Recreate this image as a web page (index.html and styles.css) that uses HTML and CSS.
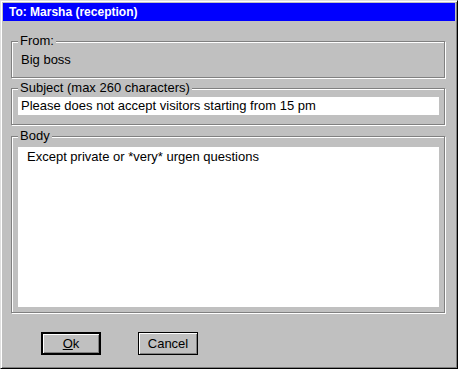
FILE: index.html
```html
<!DOCTYPE html>
<html lang="en">
<head>
    <meta charset="UTF-8">
    <title>To: Marsha (reception)</title>
    <link rel="stylesheet" href="styles.css">
</head>
<body>
    <div class="window">
        <div class="title-bar">To: Marsha (reception)</div>
        <div class="content">
            <div class="group group-from">
                <span class="group-label">From:</span>
                <div class="from-value">Big boss</div>
            </div>
            <div class="group group-subject">
                <span class="group-label">Subject (max 260 characters)</span>
                <div class="field">Please does not accept visitors starting from 15 pm</div>
            </div>
            <div class="group group-body">
                <span class="group-label">Body</span>
                <div class="field field-body">Except private or *very* urgen questions</div>
            </div>
            <div class="buttons">
                <button class="btn btn-default"><u>O</u>k</button>
                <button class="btn">Cancel</button>
            </div>
        </div>
    </div>
</body>
</html>
```

FILE: styles.css
```css
body {
    margin: 0;
    font-family: "Liberation Sans", Arial, sans-serif;
    font-size: 13px;
    color: #000;
}
.window {
    width: 458px;
    height: 369px;
    box-sizing: border-box;
    background-color: #c0c0c0;
    border: 1px solid;
    border-color: #dfdfdf #000 #000 #dfdfdf;
    box-shadow: inset 1px 1px #fff, inset -1px -1px #808080;
    padding: 2px;
}
.title-bar {
    height: 18px;
    line-height: 18px;
    background-color: #0000ff;
    color: #fff;
    font-weight: bold;
    font-size: 12px;
    padding-left: 6px;
}
.content {
    padding: 0 10px 0 8px;
}
.group {
    position: relative;
    border: 1px solid #808080;
    box-shadow: 1px 1px 0 #fff, inset 1px 1px 0 #fff;
}
.group-label {
    position: absolute;
    top: -9px;
    left: 6px;
    padding: 0 2px;
    line-height: 16px;
    background-color: #c0c0c0;
}
.group-from {
    margin-top: 20px;
    padding: 10px 9px 9px;
}
.from-value {
    line-height: 16px;
}
.group-subject {
    margin-top: 10px;
    padding: 8px 5px 9px 6px;
}
.group-body {
    margin-top: 11px;
    padding: 10px 5px 5px 6px;
}
.field {
    box-sizing: border-box;
    background-color: #fff;
    height: 18px;
    line-height: 18px;
    padding-left: 3px;
    white-space: nowrap;
}
.field-body {
    height: 160px;
    line-height: 16px;
    padding: 2px 9px;
}
.buttons {
    display: flex;
    gap: 37px;
    margin-top: 19px;
    padding-left: 30px;
}
.btn {
    width: 60px;
    height: 23px;
    padding: 0;
    font: inherit;
    color: #000;
    background-color: #c0c0c0;
    border: 1px solid #000;
    box-shadow: inset 1px 1px #fff, inset -1px -1px #808080;
}
.btn-default {
    border-width: 2px;
}
```
